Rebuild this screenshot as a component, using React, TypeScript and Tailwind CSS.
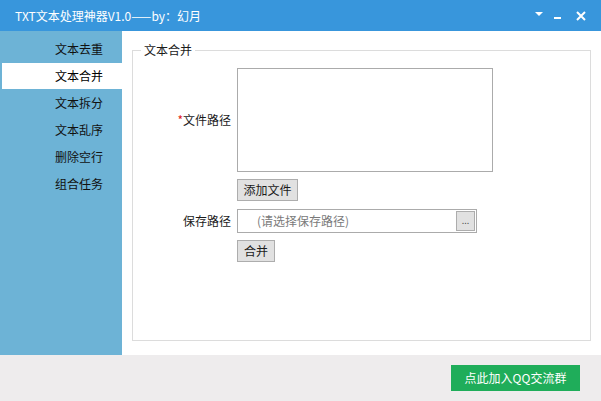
import React from "react";

const font = { fontFamily: '"Microsoft YaHei", "Noto Sans CJK SC", "Noto Sans", sans-serif' };

export default function App() {
  const items = ["文本去重", "文本合并", "文本拆分", "文本乱序", "删除空行", "组合任务"];
  return (
    <div className="w-[601px] h-[401px] flex flex-col bg-white text-[12px] text-[#1b1b1b] overflow-hidden" style={font}>
      {/* title bar */}
      <div className="h-[31px] bg-[#3896dc] flex items-center text-white shrink-0">
        <div className="pl-[15px] text-[12px] flex-1 leading-none">TXT文本处理神器V1.0——by：幻月</div>
        <div className="flex items-center pr-[15px]">
          <svg width="8" height="5" viewBox="0 0 8 5" className="mr-[11px] mt-[-2px]">
            <polygon points="0,0 8,0 4,4" fill="white" />
          </svg>
          <svg width="8" height="8" viewBox="0 0 8 8" className="mr-[14px] mt-[2px]">
            <rect x="0" y="4" width="7" height="2" fill="white" />
          </svg>
          <svg width="10" height="10" viewBox="0 0 10 10">
            <path d="M1 1 L9 9 M9 1 L1 9" stroke="white" strokeWidth="2" />
          </svg>
        </div>
      </div>
      {/* middle */}
      <div className="flex h-[324px] shrink-0">
        <div className="w-[122px] bg-[#6db3d6] pt-[5px] flex flex-col gap-[1px] shrink-0">
          {items.map((t, i) => (
            <div
              key={t}
              className={
                i === 1
                  ? "h-[26px] ml-[2px] bg-white flex items-center justify-end pr-[19px] text-black"
                  : "h-[26px] ml-[2px] flex items-center justify-end pr-[19px] text-[#111]"
              }
            >
              {t}
            </div>
          ))}
        </div>
        <div className="flex-1 pl-[10px] pr-[10px] pt-[19px] pb-[14px]">
          <div className="relative h-full border border-[#dcdcdc]">
            <span className="absolute left-[8px] top-[-9px] bg-white px-[3px] leading-[16px]">文本合并</span>
            <div className="grid grid-cols-[98px_auto] gap-x-[6px] pt-[17px]">
              <div className="flex items-center justify-end h-[104px]">
                <span className="text-[#e02020]">*</span>文件路径
              </div>
              <div className="w-[256px] h-[104px] border border-[#ababab] bg-white" />
              <div />
              <div className="mt-[7px]">
                <button className="h-[22px] w-[61px] border border-[#adadad] bg-[#e1e1e1] text-[12px] leading-none flex items-center justify-center">
                  添加文件
                </button>
              </div>
              <div className="flex items-center justify-end mt-[8px] h-[24px]">保存路径</div>
              <div className="mt-[8px] w-[240px] h-[24px] border border-[#ababab] flex items-center pl-[19px] pr-[1px]">
                <span className="flex-1 text-[#7a7a7a]">(请选择保存路径)</span>
                <div className="w-[19px] h-[20px] border border-[#adadad] bg-[#e1e1e1] flex items-center justify-center text-[9px] text-[#555] leading-none pb-[2px]">
                  ...
                </div>
              </div>
              <div />
              <div className="mt-[7px]">
                <button className="h-[22px] w-[38px] border border-[#adadad] bg-[#e1e1e1] text-[12px] leading-none flex items-center justify-center">
                  合并
                </button>
              </div>
            </div>
          </div>
        </div>
      </div>
      {/* bottom */}
      <div className="flex-1 bg-[#eeeced] flex items-center justify-end pr-[21px]">
        <button className="w-[129px] h-[26px] bg-[#1fad5a] text-white text-[12px] flex items-center justify-center">
          点此加入QQ交流群
        </button>
      </div>
    </div>
  );
}
